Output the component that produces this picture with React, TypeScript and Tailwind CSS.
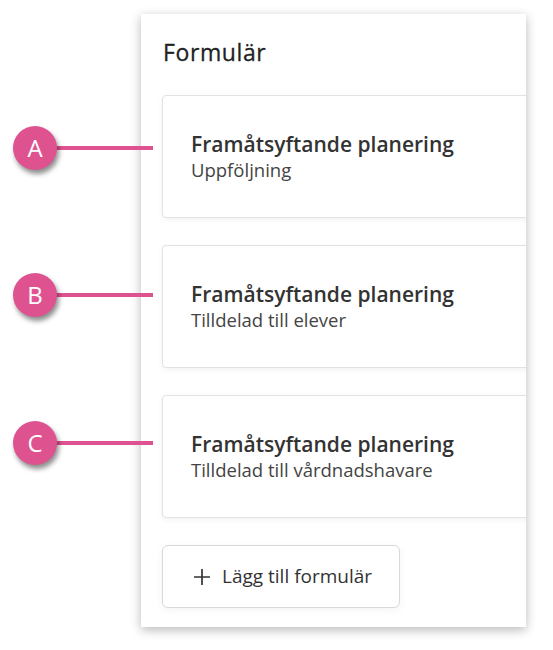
import React from "react";

const cards = [
  { title: "Framåtsyftande planering", sub: "Uppföljning" },
  { title: "Framåtsyftande planering", sub: "Tilldelad till elever" },
  { title: "Framåtsyftande planering", sub: "Tilldelad till vårdnadshavare" },
];

const markers = [
  { label: "A", y: 148 },
  { label: "B", y: 295 },
  { label: "C", y: 443 },
];

export default function App() {
  return (
    <div
      className="relative w-[553px] h-[650px] bg-white overflow-hidden"
      style={{ fontFamily: '"Open Sans", "Noto Sans", sans-serif' }}
    >
      <div className="pl-[141px] pt-[14px]">
        <div className="w-[385px] h-[613px] bg-white overflow-hidden shadow-[0_3px_10px_rgba(0,0,0,0.28)] pl-[21px] pt-[23px]">
          <h2 className="text-[23px] leading-[31px] font-medium tracking-[0.6px] text-[#222] ml-[1px] [-webkit-text-stroke:0.3px_#222]">Formulär</h2>
          <div className="mt-[27px] flex flex-col gap-[27px]">
            {cards.map((c, i) => (
              <div
                key={i}
                className="w-[420px] h-[123px] border border-[#e2e2e2] rounded-[4px] bg-white shadow-[0_2px_6px_rgba(0,0,0,0.05)] pl-[28px] pt-[34px]"
              >
                <div className="text-[21px] leading-[28px] font-semibold text-[#333]">{c.title}</div>
                <div className="text-[18.5px] leading-[24px] text-[#444]">{c.sub}</div>
              </div>
            ))}
          </div>
          <button className="mt-[27px] w-[238px] h-[63px] border border-[#d9d9d9] rounded-[6px] bg-white flex items-center pl-[30px] gap-[11px] text-[19px] text-[#333] shadow-[0_2px_8px_rgba(0,0,0,0.05)]">
            <svg width="18" height="18" viewBox="0 0 18 18" className="shrink-0">
              <path d="M9 1v16M1 9h16" stroke="#333" strokeWidth="1.7" fill="none" />
            </svg>
            <span>Lägg till formulär</span>
          </button>
        </div>
      </div>

      {markers.map((m) => (
        <div key={m.label} className="absolute left-[13px]" style={{ top: m.y - 22 }}>
          <div className="relative flex items-center">
            <div className="w-[44px] h-[44px] rounded-full bg-[#df5290] flex items-center justify-center text-white text-[24px] leading-none shadow-[2px_4px_5px_rgba(0,0,0,0.45)] z-10">
              {m.label}
            </div>
            <div className="w-[98px] h-[4px] bg-[#df5290] -ml-[2px]" />
          </div>
        </div>
      ))}
    </div>
  );
}
